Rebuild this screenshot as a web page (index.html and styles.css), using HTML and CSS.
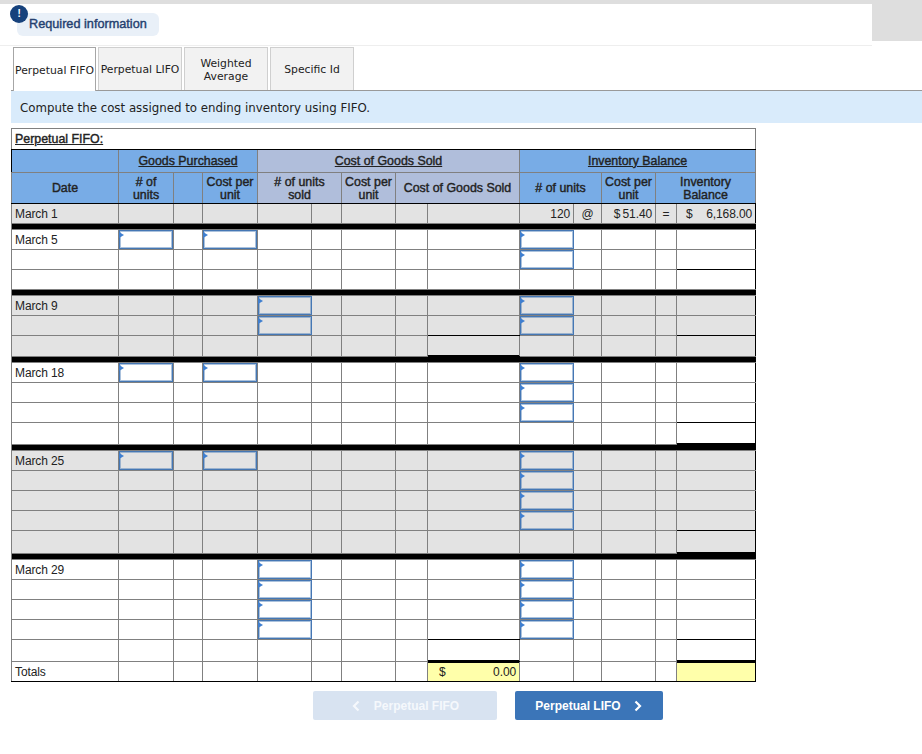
FILE: index.html
```html
<!DOCTYPE html>
<html lang="en">
<head>
<meta charset="utf-8">
<title>Required information</title>
<link rel="stylesheet" href="styles.css">
</head>
<body>
<header class="top">
  <div class="top-main">
    <div class="notice"><span class="notice-badge">!</span><span class="notice-text">Required information</span></div>
  </div>
  <div class="top-side"></div>
</header>
<nav class="tabs">
  <div class="tab active">Perpetual FIFO</div>
  <div class="tab">Perpetual LIFO</div>
  <div class="tab">Weighted<br>Average</div>
  <div class="tab">Specific Id</div>
</nav>
<p class="prompt">Compute the cost assigned to ending inventory using FIFO.</p>
<table class="sheet">
  <colgroup>
    <col class="c107"><col class="c55"><col class="c29"><col class="c55"><col class="c54"><col class="c30"><col class="c54"><col class="c32"><col class="c92"><col class="c54"><col class="c28"><col class="c54"><col class="c21"><col class="c79">
  </colgroup>
  <thead>
    <tr class="r-title"><th colspan="14" class="title"><u>Perpetual FIFO:</u></th></tr>
    <tr class="r-h1">
      <th class="blue bl"></th>
      <th colspan="3" class="blue bl"><u>Goods Purchased</u></th>
      <th colspan="5" class="slate bl"><u>Cost of Goods Sold</u></th>
      <th colspan="5" class="blue bl"><u>Inventory Balance</u></th>
    </tr>
    <tr class="r-h2">
      <th class="blue">Date</th>
      <th class="blue bl"># of<br>units</th>
      <th class="blue"></th>
      <th class="blue">Cost per<br>unit</th>
      <th colspan="2" class="slate bl"># of units<br>sold</th>
      <th class="slate">Cost per<br>unit</th>
      <th colspan="2" class="slate">Cost of Goods Sold</th>
      <th colspan="2" class="blue bl"># of units</th>
      <th class="blue">Cost per<br>unit</th>
      <th colspan="2" class="blue">Inventory<br>Balance</th>
    </tr>
  </thead>
  <tbody>
    <tr class="r20 shade"><td class="date">March 1</td><td class="bl"></td><td></td><td></td><td class="bl"></td><td></td><td></td><td></td><td></td><td class="bl num">120</td><td class="mid">@</td><td class="num"><span class="cur">$</span> 51.40</td><td class="mid">=</td><td class="num bal"><span class="cur2">$</span>6,168.00</td></tr>
    <tr class="sep"><td colspan="14"></td></tr>

    <tr class="r20"><td class="date">March 5</td><td class="bl in"><input></td><td></td><td class="in"><input></td><td class="bl"></td><td></td><td></td><td></td><td></td><td class="bl in"><input></td><td></td><td></td><td></td><td class="bal"></td></tr>
    <tr class="r20"><td></td><td class="bl"></td><td></td><td></td><td class="bl"></td><td></td><td></td><td></td><td></td><td class="bl in"><input></td><td></td><td></td><td></td><td class="bal ul"></td></tr>
    <tr class="r20"><td></td><td class="bl"></td><td></td><td></td><td class="bl"></td><td></td><td></td><td></td><td></td><td class="bl"></td><td></td><td></td><td></td><td class="bal"></td></tr>
    <tr class="sep"><td colspan="14"></td></tr>

    <tr class="r20 shade"><td class="date">March 9</td><td class="bl"></td><td></td><td></td><td class="bl in"><input></td><td></td><td></td><td></td><td></td><td class="bl in"><input></td><td></td><td></td><td></td><td class="bal"></td></tr>
    <tr class="r20 shade"><td></td><td class="bl"></td><td></td><td></td><td class="bl in"><input></td><td></td><td></td><td></td><td class="ul"></td><td class="bl in"><input></td><td></td><td></td><td></td><td class="bal ul"></td></tr>
    <tr class="r21 shade"><td></td><td class="bl"></td><td></td><td></td><td class="bl"></td><td></td><td></td><td></td><td class="dbl"></td><td class="bl"></td><td></td><td></td><td></td><td class="bal"></td></tr>
    <tr class="sep"><td colspan="14"></td></tr>

    <tr class="r20"><td class="date">March 18</td><td class="bl in"><input></td><td></td><td class="in"><input></td><td class="bl"></td><td></td><td></td><td></td><td></td><td class="bl in"><input></td><td></td><td></td><td></td><td class="bal"></td></tr>
    <tr class="r20"><td></td><td class="bl"></td><td></td><td></td><td class="bl"></td><td></td><td></td><td></td><td></td><td class="bl in"><input></td><td></td><td></td><td></td><td class="bal"></td></tr>
    <tr class="r20"><td></td><td class="bl"></td><td></td><td></td><td class="bl"></td><td></td><td></td><td></td><td></td><td class="bl in"><input></td><td></td><td></td><td></td><td class="bal ul"></td></tr>
    <tr class="r22"><td></td><td class="bl"></td><td></td><td></td><td class="bl"></td><td></td><td></td><td></td><td></td><td class="bl"></td><td></td><td></td><td></td><td class="bal dbl"></td></tr>
    <tr class="sep"><td colspan="14"></td></tr>

    <tr class="r20 shade"><td class="date">March 25</td><td class="bl in"><input></td><td></td><td class="in"><input></td><td class="bl"></td><td></td><td></td><td></td><td></td><td class="bl in"><input></td><td></td><td></td><td></td><td class="bal"></td></tr>
    <tr class="r20 shade"><td></td><td class="bl"></td><td></td><td></td><td class="bl"></td><td></td><td></td><td></td><td></td><td class="bl in"><input></td><td></td><td></td><td></td><td class="bal"></td></tr>
    <tr class="r20 shade"><td></td><td class="bl"></td><td></td><td></td><td class="bl"></td><td></td><td></td><td></td><td></td><td class="bl in"><input></td><td></td><td></td><td></td><td class="bal"></td></tr>
    <tr class="r20 shade"><td></td><td class="bl"></td><td></td><td></td><td class="bl"></td><td></td><td></td><td></td><td></td><td class="bl in"><input></td><td></td><td></td><td></td><td class="bal ul"></td></tr>
    <tr class="r23 shade"><td></td><td class="bl"></td><td></td><td></td><td class="bl"></td><td></td><td></td><td></td><td></td><td class="bl"></td><td></td><td></td><td></td><td class="bal dbl"></td></tr>
    <tr class="sep"><td colspan="14"></td></tr>

    <tr class="r20"><td class="date">March 29</td><td class="bl"></td><td></td><td></td><td class="bl in"><input></td><td></td><td></td><td></td><td></td><td class="bl in"><input></td><td></td><td></td><td></td><td class="bal"></td></tr>
    <tr class="r20"><td></td><td class="bl"></td><td></td><td></td><td class="bl in"><input></td><td></td><td></td><td></td><td></td><td class="bl in"><input></td><td></td><td></td><td></td><td class="bal"></td></tr>
    <tr class="r20"><td></td><td class="bl"></td><td></td><td></td><td class="bl in"><input></td><td></td><td></td><td></td><td></td><td class="bl in"><input></td><td></td><td></td><td></td><td class="bal"></td></tr>
    <tr class="r20"><td></td><td class="bl"></td><td></td><td></td><td class="bl in"><input></td><td></td><td></td><td></td><td class="ul"></td><td class="bl in"><input></td><td></td><td></td><td></td><td class="bal ul"></td></tr>
    <tr class="r22"><td></td><td class="bl"></td><td></td><td></td><td class="bl"></td><td></td><td></td><td></td><td class="dbl"></td><td class="bl"></td><td></td><td></td><td></td><td class="bal dbl"></td></tr>

    <tr class="r20 totals"><td class="date">Totals</td><td class="bl"></td><td></td><td></td><td class="bl"></td><td></td><td></td><td></td><td class="yellow num"><span class="cur3">$</span>0.00</td><td class="bl"></td><td></td><td></td><td></td><td class="bal yellow"></td></tr>
  </tbody>
</table>
<div class="pager">
  <button class="btn btn-off" type="button">
    <svg class="chev" viewBox="0 0 10 12" width="10" height="12"><path d="M7.5 1.5 3 6l4.500 4.500" fill="none" stroke="currentColor" stroke-width="2.200"/></svg>
    <span>Perpetual FIFO</span>
  </button>
  <button class="btn btn-on" type="button">
    <span>Perpetual LIFO</span>
    <svg class="chev" viewBox="0 0 10 12" width="10" height="12"><path d="M2.500 1.500 7 6l-4.500 4.500" fill="none" stroke="currentColor" stroke-width="2.200"/></svg>
  </button>
</div>
</body>
</html>
```
FILE: styles.css
```css
* { box-sizing: border-box; }
html, body { margin: 0; padding: 0; background: #fff; }
body { width: 922px; height: 754px; overflow: hidden; font-family: "Liberation Sans", Arial, sans-serif; font-size: 12px; letter-spacing: -.12px; color: #222; }

.top { display: flex; height: 46px; border-top: 4px solid #dedede; }
.top-main { flex: 1; border-bottom: 1px solid #eeeeee; padding: 9px 0 0 17px; }
.top-side { width: 50px; height: 37px; background: #dedede; }

.notice { position: relative; width: 142px; height: 23px; background: #e9f0f8; border-radius: 6px; padding: 4px 0 0 12px; }
.notice-text { font-size: 12.700px; letter-spacing: 0; -webkit-text-stroke: .4px #24406f; color: #24406f; line-height: 15px; }
.notice-badge { position: absolute; left: -7px; top: -8px; width: 18px; height: 18px; border-radius: 50%; background: #17427c; color: #fff; font-weight: bold; font-size: 10px; line-height: 17px; text-align: center; }

.tabs { display: flex; gap: 2px; height: 44px; margin: 1px 0 0 11px; padding-left: 2px; border-bottom: 1px solid #999; font-family: "DejaVu Sans", Verdana, sans-serif; font-size: 10.800px; letter-spacing: 0; line-height: 13px; color: #222; }
.tab { width: 84px; height: 43px; padding-top: 1px; display: flex; align-items: center; justify-content: center; text-align: center; background: #f2f2f2; border: 1px solid #cfcfcf; border-bottom: 0; white-space: nowrap; }
.tab.active { width: 83px; height: 44px; background: #fff; border-color: #a6a6a6; border-bottom: 0; }

.prompt { margin: 0 0 5px 11px; height: 32px; padding: 1px 0 0 9px; background: #d9ebfb; font-family: "DejaVu Sans", Verdana, sans-serif; font-size: 11.800px; letter-spacing: 0; line-height: 32px; color: #222; }

.sheet { margin-left: 11px; width: 745px; table-layout: fixed; border-collapse: collapse; border: 1px solid #808080; }
.sheet th, .sheet td { border: 1px solid #808080; padding: 0; overflow: hidden; white-space: nowrap; }
.c107 { width: 107px; } .c55 { width: 55px; } .c29 { width: 29px; } .c54 { width: 54px; } .c30 { width: 30px; } .c32 { width: 32px; } .c92 { width: 92px; } .c28 { width: 28px; } .c21 { width: 21px; } .c79 { width: 79px; }

.r-title { height: 21px; }
.r-h1 { height: 23px; }
.r-h2 { height: 31px; }
.r20 { height: 20px; }
.r21 { height: 21px; }
.r22 { height: 22px; }
.r23 { height: 23px; }

.sheet th { font-weight: normal; font-size: 12.400px; letter-spacing: 0; -webkit-text-stroke: .4px #222; line-height: 13px; text-align: center; color: #222; }
.r-h2 th { padding-top: 1px; }
.sheet th.title { text-align: left; padding-left: 3px; }
.r-title th { border-bottom-color: #000; }
.r-h1 th { border-top-color: #000; }
.blue { background: #78ace6; }
.slate { background: #b0bedb; }
.sheet td.bl, .sheet th.bl { border-left-color: #000; }
thead .r-h2 th { border-bottom: 1px solid #000; }

.shade td { background: #e3e3e3; }
.date { padding-left: 3px !important; line-height: 14px; }
.num { text-align: right; padding-right: 3px !important; }
.mid { text-align: center; }
.cur { margin-right: -1px; }
.cur2 { float: left; margin-left: 9px; }
.cur3 { float: left; margin-left: 11px; }
.sheet td.bal, .sheet td:last-child { border-right-color: #000; }
.sheet td.ul { border-bottom-color: #000; }
.sheet td.dbl { border-bottom-color: #000; box-shadow: inset 0 -1px 0 #000; }

.sep td { background: #000; line-height: 0; }
.sep { height: 6px; }

.sheet td.in { position: relative; line-height: 0; overflow: visible; }
.in input { display: block; width: 54px; height: 19px; margin: 0; padding: 0; border: 1px solid #4577b4; box-shadow: inset 0 0 0 1px rgba(69, 119, 180, .45); background: transparent; outline: 0; }
.in::before { content: ""; position: absolute; left: 0; top: 2px; border-left: 5px solid #3f7fd0; border-top: 3px solid transparent; border-bottom: 3px solid transparent; }

.totals td { border-bottom-color: #000; }
.yellow { background: #ffffaa; }
.sheet .totals td.yellow { border-top-color: #000; box-shadow: inset 0 1px 0 #000; }

.pager { display: flex; gap: 18px; margin: 9px 0 0 313px; }
.btn { display: flex; align-items: center; justify-content: center; height: 29px; padding: 0; border: 0; border-radius: 2px; font-family: "Liberation Sans", Arial, sans-serif; font-size: 12px; font-weight: bold; letter-spacing: 0; }
.btn-off { width: 184px; gap: 13px; background: #d8e3f1; color: #f5f8fc; }
.btn-on { width: 148px; gap: 12px; background: #3b75b8; color: #fff; }
```
